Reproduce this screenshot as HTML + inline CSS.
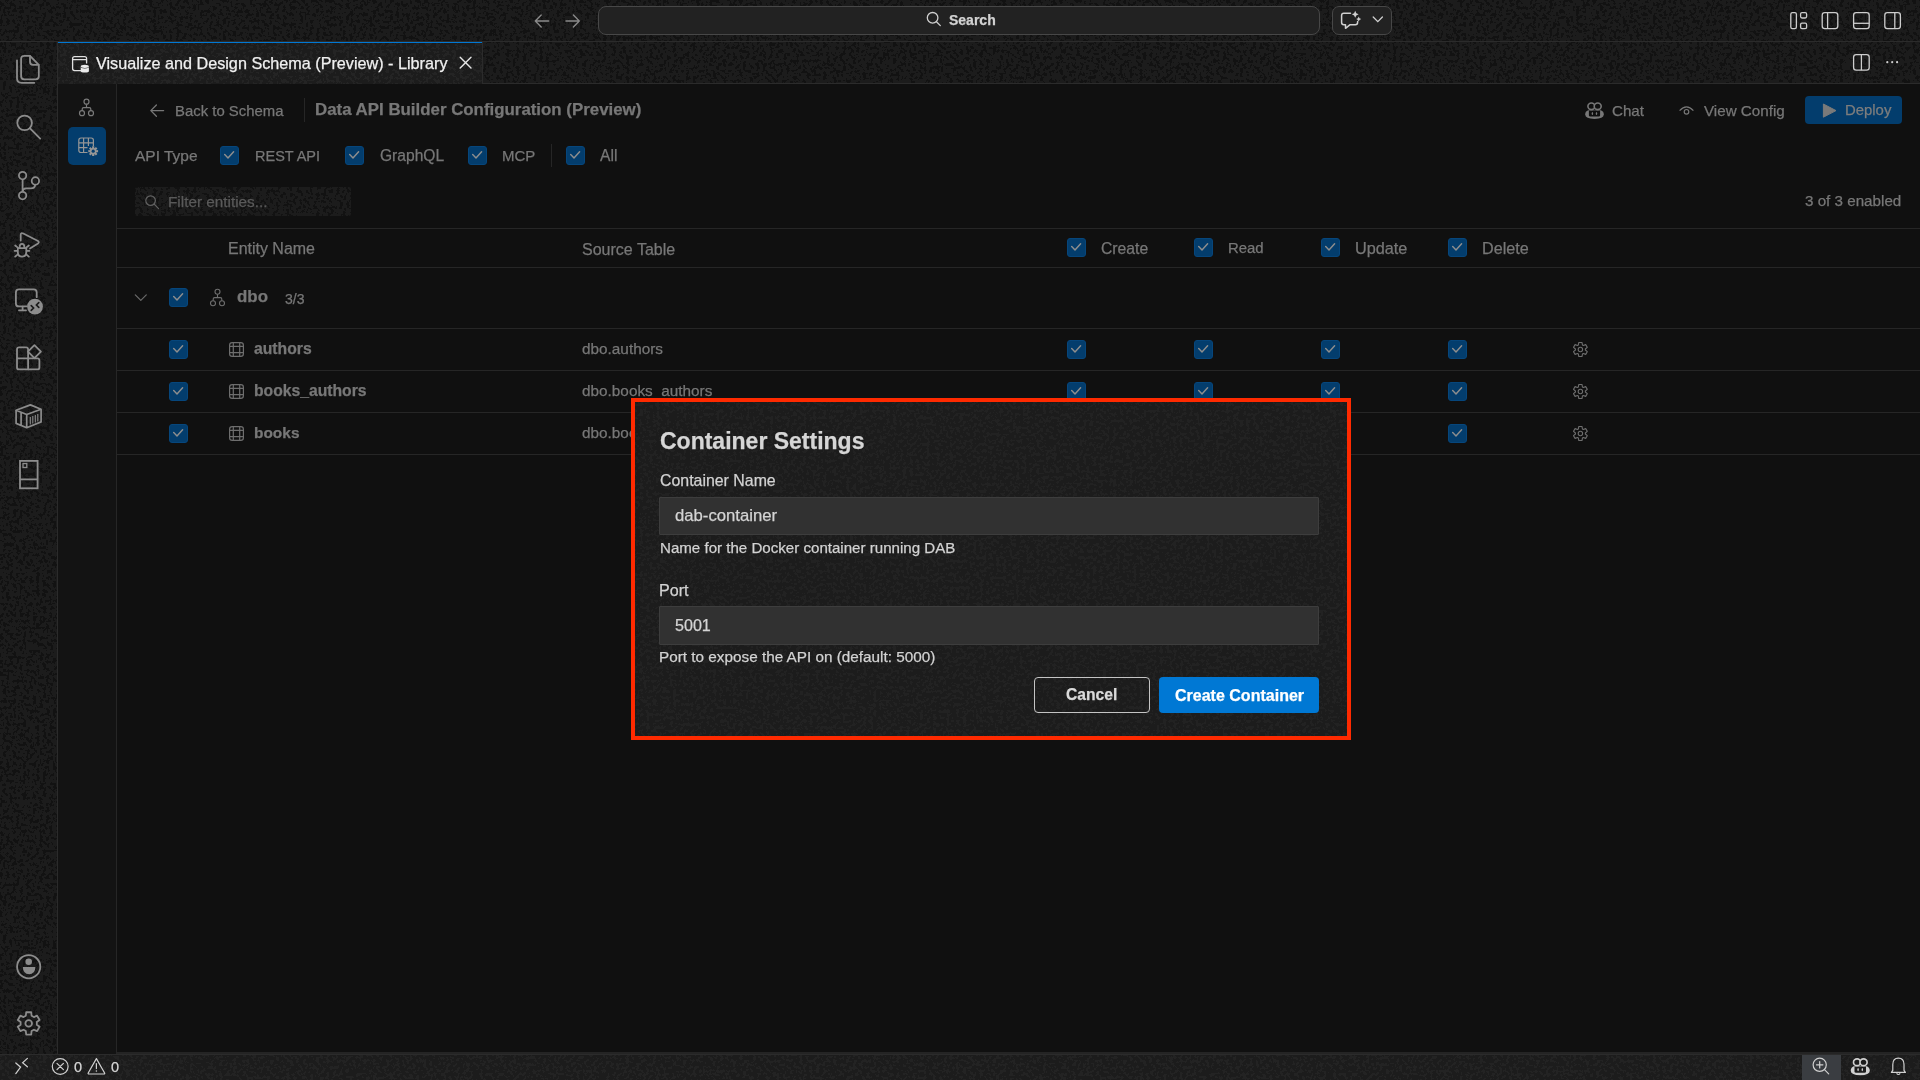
<!DOCTYPE html>
<html><head><meta charset="utf-8"><style>
*{margin:0;padding:0;box-sizing:border-box}
html,body{width:1920px;height:1080px;overflow:hidden;background:#101010;font-family:"Liberation Sans",sans-serif;}
.a{position:absolute}
.t{position:absolute;white-space:nowrap;line-height:1;-webkit-text-stroke:0.25px currentColor;will-change:transform}
svg{position:absolute;overflow:visible}
</style></head><body>
<div class="a" style="left:0px;top:0px;width:1920px;height:41px;background:#1c1c1c;"></div>
<div class="a" style="left:0px;top:41px;width:1920px;height:1px;background:#2b2b2b;"></div>
<div class="a" style="left:0px;top:42px;width:57px;height:1012px;background:#1c1c1c;"></div>
<div class="a" style="left:57px;top:42px;width:1px;height:1012px;background:#2b2b2b;"></div>
<div class="a" style="left:58px;top:42px;width:1862px;height:42px;background:#1c1c1c;"></div>
<div class="a" style="left:482px;top:83px;width:1438px;height:1px;background:#2b2b2b;"></div>
<div class="a" style="left:58px;top:42px;width:424px;height:42px;background:#1c1c1c;"></div>
<div class="a" style="left:58px;top:42px;width:424px;height:1px;background:#0078d4;"></div>
<div class="a" style="left:482px;top:42px;width:1px;height:42px;background:#2b2b2b;"></div>
<div class="a" style="left:58px;top:84px;width:58px;height:970px;background:#131313;"></div>
<div class="a" style="left:116px;top:84px;width:1px;height:970px;background:#262626;"></div>
<div class="a" style="left:117px;top:84px;width:1803px;height:968px;background:#101010;"></div>
<div class="a" style="left:117px;top:1052px;width:1803px;height:2px;background:#242424;"></div>
<div class="a" style="left:0px;top:1054px;width:1920px;height:1px;background:#2b2b2b;"></div>
<div class="a" style="left:0px;top:1055px;width:1920px;height:25px;background:#1c1c1c;"></div>
<svg style="left:0;top:0" width="1920" height="1080" viewBox="0 0 1920 1080" fill="none"><defs><filter id="nzD" x="0" y="0" width="1" height="1" color-interpolation-filters="sRGB"><feTurbulence type="fractalNoise" baseFrequency="0.3" numOctaves="2" seed="3" result="n"/><feColorMatrix in="n" type="matrix" values="0 0 0 0 0 0 0 0 0 0 0 0 0 0 0 1 0 0 0 0" result="a"/><feComponentTransfer in="a" result="m"><feFuncA type="discrete" tableValues="0 0 0 0 0 0 0 0 0 0 0 1 1 1 1 1 1 1 1 1"/></feComponentTransfer><feFlood flood-color="#121212"/><feComposite in2="m" operator="in"/></filter><filter id="nzT" x="0" y="0" width="1" height="1" color-interpolation-filters="sRGB"><feTurbulence type="fractalNoise" baseFrequency="0.3" numOctaves="2" seed="5" result="n"/><feColorMatrix in="n" type="matrix" values="0 0 0 0 0 0 0 0 0 0 0 0 0 0 0 1 0 0 0 0" result="a"/><feComponentTransfer in="a" result="m"><feFuncA type="discrete" tableValues="0 0 0 0 0 0 0 0 0 0 0 1 1 1 1 1 1 1 1 1"/></feComponentTransfer><feFlood flood-color="#242424"/><feComposite in2="m" operator="in"/></filter><filter id="nzS" x="0" y="0" width="1" height="1" color-interpolation-filters="sRGB"><feTurbulence type="fractalNoise" baseFrequency="0.3" numOctaves="2" seed="7" result="n"/><feColorMatrix in="n" type="matrix" values="0 0 0 0 0 0 0 0 0 0 0 0 0 0 0 1 0 0 0 0" result="a"/><feComponentTransfer in="a" result="m"><feFuncA type="discrete" tableValues="0 0 0 0 0 0 0 0 0 0 0 1 1 1 1 1 1 1 1 1"/></feComponentTransfer><feFlood flood-color="#232323"/><feComposite in2="m" operator="in"/></filter><filter id="nzG" x="0" y="0" width="1" height="1" color-interpolation-filters="sRGB"><feTurbulence type="fractalNoise" baseFrequency="0.3" numOctaves="2" seed="11" result="n"/><feColorMatrix in="n" type="matrix" values="0 0 0 0 0 0 0 0 0 0 0 0 0 0 0 1 0 0 0 0" result="a"/><feComponentTransfer in="a" result="m"><feFuncA type="discrete" tableValues="0 0 0 0 0 0 0 0 0 0 0 1 1 1 1 1 1 1 1 1"/></feComponentTransfer><feFlood flood-color="#222222"/><feComposite in2="m" operator="in"/></filter></defs><rect x="0" y="0" width="1920" height="41" fill="#000" filter="url(#nzD)"/><rect x="0" y="42" width="57" height="1012" fill="#000" filter="url(#nzD)"/><rect x="483" y="42" width="1437" height="41" fill="#000" filter="url(#nzD)"/><rect x="58" y="43" width="424" height="41" fill="#000" filter="url(#nzT)"/><rect x="0" y="1055" width="1920" height="25" fill="#000" filter="url(#nzS)"/></svg>
<div class="a" style="left:598px;top:6px;width:722px;height:29px;background:#222;border:1px solid #474747;border-radius:8px"></div>
<div class="a" style="left:1332px;top:6px;width:60px;height:29px;background:#222;border:1px solid #474747;border-radius:7px"></div>
<div class="t" style="left:948.8px;top:13.45px;font-size:14px;color:#d2d2d2;font-weight:bold;">Search</div>
<div class="t" style="left:96.4px;top:55.29px;font-size:16.2px;color:#f0f0f0;font-weight:normal;">Visualize and Design Schema (Preview) - Library</div>
<div class="t" style="left:74.3px;top:1059.93px;font-size:14.5px;color:#d6d6d6;font-weight:normal;">0</div>
<div class="t" style="left:110.6px;top:1059.93px;font-size:14.5px;color:#d6d6d6;font-weight:normal;">0</div>
<div class="a" style="left:1802px;top:1055px;width:39px;height:25px;background:#3a3d41;"></div>
<svg style="left:0;top:0" width="1920" height="1080" viewBox="0 0 1920 1080" fill="none"><g stroke="#8c8c8c" stroke-width="1.8" stroke-linejoin="round" stroke-linecap="round"><path d="M24,55.9 H30 L38.8,64.8 V76.3 Q38.8,79.3 35.8,79.3 H24.1 Q21.1,79.3 21.1,76.3 V58.9 Q21.1,55.9 24.1,55.9Z"/><path d="M30,56.2 V61.8 Q30,64.8 33,64.8 H38.5"/><path d="M17,60.3 V78.3 Q17,82.8 21.5,82.8 H34.4"/></g><g stroke="#8c8c8c" stroke-width="1.8" stroke-linecap="round"><circle cx="24.6" cy="122.9" r="7.3"/><path d="M29.8,128.2 L40.2,138.6"/></g><g stroke="#8c8c8c" stroke-width="1.8" fill="none"><circle cx="22.6" cy="175.6" r="3.7"/><circle cx="35.4" cy="180.9" r="3.7"/><circle cx="22.6" cy="195.6" r="3.7"/><path d="M22.6,179.3 V191.9"/><path d="M35.2,184.6 Q35,188.3 31,188.3 H26 Q22.6,188.5 22.6,191.5"/></g><g stroke="#8c8c8c" stroke-width="1.8" fill="none" stroke-linecap="round" stroke-linejoin="round"><path d="M20.7,240.6 V235 Q20.7,232.2 23.3,233.5 L38,241 Q39.6,242.3 38,243.5 L30,248.5"/><path d="M17.8,248.2 H26.3 V251.8 Q26.3,256.6 22,256.6 Q17.8,256.6 17.8,251.8Z"/><path d="M19.7,248 V246.4 Q19.7,243.8 22,243.8 Q24.3,243.8 24.3,246.4 V248"/><path d="M15.2,245.5 L17.8,247.6 M28.8,245.5 L26.2,247.6 M14.6,250.8 H17.4 M29.4,250.8 H26.6 M15.2,256.6 L17.8,254.4 M28.8,256.6 L26.2,254.4"/></g><g stroke="#8c8c8c" stroke-width="1.8" fill="none" stroke-linecap="round"><path d="M36.7,297.2 V292.4 Q36.7,289.4 33.7,289.4 H18.9 Q15.9,289.4 15.9,292.4 V303.4 Q15.9,306.4 18.9,306.4 H26.8"/><path d="M22.6,306.6 V310.3 M19,310.3 H26"/></g><circle cx="35" cy="306.6" r="7.9" fill="#8c8c8c"/><g stroke="#191919" stroke-width="1.6" fill="none" stroke-linecap="round"><path d="M31.2,305.6 L33.6,308 L31.2,310.4 M38.8,302.6 L36.4,305 L38.8,307.4"/></g><g stroke="#8c8c8c" stroke-width="1.8" fill="none" stroke-linejoin="round"><path d="M19,347.4 H26 Q28.1,347.4 28.1,349.4 V369.4 H19 Q17,369.4 17,367.4 V349.4 Q17,347.4 19,347.4Z"/><path d="M17,358.3 H37.4 Q39.4,358.3 39.4,360.3 V367.4 Q39.4,369.4 37.4,369.4 H28.1"/><path d="M34.4,345.2 L40.9,351.7 L34.4,358.2 L27.9,351.7Z"/></g><g stroke="#8c8c8c" stroke-width="1.7" fill="none" stroke-linejoin="round"><path d="M16.1,410.3 L30.4,404.9 L41.1,409.3 L26.7,414.5Z"/><path d="M16.1,410.3 V423.4 L26.7,427.7 L41.1,421.9 V409.3 M26.7,414.5 V427.7 M21.1,412.5 V425.5"/><path d="M30.3,417 V424.5 M32.8,416 V423.5 M35.3,415 V422.5 M37.8,414 V421.5" stroke-width="1.1"/></g><g stroke="#8c8c8c" stroke-width="1.8" fill="none"><rect x="20" y="460.9" width="17.6" height="27.4"/><path d="M20,479.4 H37.6"/><rect x="23" y="463.5" width="3.8" height="4" stroke-width="1.3"/></g><g><circle cx="28.7" cy="966.7" r="11.6" stroke="#8c8c8c" stroke-width="1.8" fill="none"/><circle cx="28.7" cy="961.8" r="3.3" fill="#8c8c8c"/><path d="M22.9,967.1 H35.3 Q35.3,974.2 29.1,974.2 Q22.9,974.2 22.9,967.1Z" fill="#8c8c8c"/></g><path d="M25.81,1015.73 L26.21,1012.27 L31.19,1012.27 L31.59,1015.73 L33.90,1017.06 L37.09,1015.68 L39.58,1019.99 L36.79,1022.06 L36.79,1024.74 L39.58,1026.81 L37.09,1031.12 L33.90,1029.74 L31.59,1031.07 L31.19,1034.53 L26.21,1034.53 L25.81,1031.07 L23.50,1029.74 L20.31,1031.12 L17.82,1026.81 L20.61,1024.74 L20.61,1022.06 L17.82,1019.99 L20.31,1015.68 L23.50,1017.06Z" stroke="#8c8c8c" stroke-width="1.8" fill="none" stroke-linejoin="round"/><circle cx="28.7" cy="1023.4" r="3.3" stroke="#8c8c8c" stroke-width="1.8" fill="none"/><g stroke="#8a8a8a" stroke-width="1.4" fill="none" stroke-linecap="round" stroke-linejoin="round"><path d="M535.3,21 H548.7 M541.2,15.1 L535.3,21 L541.2,26.9"/><path d="M579.3,21 H565.9 M573.4,15.1 L579.3,21 L573.4,26.9"/></g><g stroke="#cfcfcf" stroke-width="1.3" fill="none" stroke-linecap="round"><circle cx="932.6" cy="17.8" r="5.3"/><path d="M936.5,21.8 L940.3,25.6"/></g><g stroke="#d0d0d0" stroke-width="1.5" fill="none" stroke-linejoin="round" stroke-linecap="round"><path d="M350.5,13.2 H343.8 Q341.6,13.2 341.6,15.4 V22.6 Q341.6,24.8 343.8,24.8 H345.5 V28.3 L349.8,24.8 H355.4 Q357.6,24.8 357.6,22.6 V21.4" transform="translate(1000,0)"/></g><path d="M1355.2,10.8 L1356.3,13.2 L1358.6,14.3 L1356.3,15.4 L1355.2,17.8 L1354.1,15.4 L1351.8,14.3 L1354.1,13.2Z" fill="#d0d0d0"/><path d="M1358.7,16.6 L1359.5,18.3 L1361.2,19.1 L1359.5,19.9 L1358.7,21.6 L1357.9,19.9 L1356.2,19.1 L1357.9,18.3Z" fill="#d0d0d0"/><path d="M1373.2,17 L1377.8,21.6 L1382.4,17" stroke="#cfcfcf" stroke-width="1.3" fill="none" stroke-linecap="round"/><g stroke="#cdcdcd" stroke-width="1.3" fill="none"><rect x="1790.8" y="12.6" width="5.6" height="16" rx="1.6"/><rect x="1800.6" y="12.6" width="6" height="5.4" rx="1.4"/><rect x="1800.6" y="23.2" width="6" height="5.4" rx="1.4"/><rect x="1822.2" y="12.6" width="15.6" height="16" rx="2.6"/><path d="M1827.6,12.6 V28.6"/><rect x="1853.6" y="12.6" width="15.6" height="16" rx="2.6"/><path d="M1853.6,23.3 H1869.2"/><rect x="1884.8" y="12.6" width="15.6" height="16" rx="2.6"/><path d="M1894.8,12.6 V28.6"/><rect x="1853.6" y="54.6" width="15.6" height="15.6" rx="2.6"/><path d="M1861.4,54.6 V70.2"/></g><g fill="#cdcdcd"><circle cx="1887.3" cy="62.2" r="1.1"/><circle cx="1892.2" cy="62.2" r="1.1"/><circle cx="1897.1" cy="62.2" r="1.1"/></g><g stroke="#e0e0e0" stroke-width="1.3" fill="none"><path d="M81.5,70.6 H74.6 Q72.6,70.6 72.6,68.6 V58.6 Q72.6,56.6 74.6,56.6 H84.6 Q86.6,56.6 86.6,58.6 V63.5 M72.6,59.6 H86.6"/></g><g fill="#eaeaea"><ellipse cx="84.8" cy="66.3" rx="4.1" ry="1.6"/><path d="M80.7,66.8 V71.2 Q80.7,72.6 84.8,72.6 Q88.9,72.6 88.9,71.2 V66.8 Q88.9,68.4 84.8,68.4 Q80.7,68.4 80.7,66.8Z"/></g><path d="M460.2,57.2 L471,68 M471,57.2 L460.2,68" stroke="#e6e6e6" stroke-width="1.4" stroke-linecap="round"/><g stroke="#d0d0d0" stroke-width="1.2" fill="none" stroke-linecap="round"><path d="M15.8,1063 L20.6,1067.2 L15.8,1073.6 M27.4,1058.4 L22.6,1062.7 L27.4,1066.8"/><circle cx="60.2" cy="1066.5" r="7.9"/><path d="M57,1063.3 L63.4,1069.7 M63.4,1063.3 L57,1069.7"/><path d="M96.4,1058.6 L104.6,1073 Q105,1074 104,1074 H88.8 Q87.8,1074 88.2,1073Z" stroke-linejoin="round"/><path d="M96.4,1063.6 V1068.6"/></g><circle cx="96.4" cy="1071" r="0.8" fill="#d0d0d0"/><g stroke="#d0d0d0" stroke-width="1.2" fill="none" stroke-linecap="round"><circle cx="1819.7" cy="1064.8" r="6.6"/><path d="M1824.5,1069.6 L1828.7,1073.8 M1819.7,1061.6 V1068 M1816.5,1064.8 H1822.9"/></g></svg>
<div class="a" style="left:68px;top:127px;width:38px;height:38px;background:#033d6d;border-radius:5px"></div>
<div class="t" style="left:174.8px;top:103.79px;font-size:14.9px;color:#777777;font-weight:normal;">Back to Schema</div>
<div class="a" style="left:304px;top:98px;width:1px;height:24px;background:#262626;"></div>
<div class="t" style="left:314.7px;top:101.73px;font-size:16.86px;color:#777777;font-weight:bold;">Data API Builder Configuration (Preview)</div>
<div class="t" style="left:1612.3px;top:103.28px;font-size:15.15px;color:#777777;font-weight:normal;">Chat</div>
<div class="t" style="left:1704px;top:103.23px;font-size:15.2px;color:#777777;font-weight:normal;">View Config</div>
<div class="a" style="left:1805px;top:96px;width:97px;height:28px;background:#033d6d;border-radius:4px"></div>
<div class="t" style="left:1844.6px;top:103.49px;font-size:14.9px;color:#7d7d7d;font-weight:normal;">Deploy</div>
<div class="t" style="left:135px;top:147.78px;font-size:15.5px;color:#777777;font-weight:normal;">API Type</div>
<div class="a" style="left:220px;top:146px;width:19px;height:19px;background:#033d6d;border:1px solid #06467c;border-radius:3px"></div>
<div class="t" style="left:254.5px;top:148.63px;font-size:14.5px;color:#777777;font-weight:normal;">REST API</div>
<div class="a" style="left:345px;top:146px;width:19px;height:19px;background:#033d6d;border:1px solid #06467c;border-radius:3px"></div>
<div class="t" style="left:379.7px;top:147.71px;font-size:15.58px;color:#777777;font-weight:normal;">GraphQL</div>
<div class="a" style="left:468px;top:146px;width:19px;height:19px;background:#033d6d;border:1px solid #06467c;border-radius:3px"></div>
<div class="t" style="left:502.4px;top:148.20px;font-size:15.0px;color:#777777;font-weight:normal;">MCP</div>
<div class="a" style="left:551px;top:144px;width:1px;height:23px;background:#262626;"></div>
<div class="a" style="left:566px;top:146px;width:19px;height:19px;background:#033d6d;border:1px solid #06467c;border-radius:3px"></div>
<div class="t" style="left:600px;top:147.64px;font-size:15.66px;color:#777777;font-weight:normal;">All</div>
<div class="a" style="left:135px;top:187px;width:216px;height:29px;background:#1c1c1c;border-radius:2px"></div>
<svg style="left:0;top:0" width="1920" height="1080" viewBox="0 0 1920 1080" fill="none"><rect x="135" y="187" width="216" height="29" fill="#000" filter="url(#nzD)"/></svg>
<div class="t" style="left:167.5px;top:194.45px;font-size:15.3px;color:#5a5a5a;font-weight:normal;">Filter entities...</div>
<div class="t" style="left:1805px;top:192.93px;font-size:15.2px;color:#777777;font-weight:normal;">3 of 3 enabled</div>
<div class="a" style="left:117px;top:228px;width:1803px;height:1px;background:#262626;"></div>
<div class="t" style="left:227.7px;top:241.48px;font-size:15.97px;color:#777777;font-weight:normal;">Entity Name</div>
<div class="t" style="left:582.4px;top:241.13px;font-size:16.03px;color:#777777;font-weight:normal;">Source Table</div>
<div class="a" style="left:1067px;top:238px;width:19px;height:19px;background:#033d6d;border:1px solid #06467c;border-radius:3px"></div>
<div class="t" style="left:1101.2px;top:240.58px;font-size:15.73px;color:#777777;font-weight:normal;">Create</div>
<div class="a" style="left:1194px;top:238px;width:19px;height:19px;background:#033d6d;border:1px solid #06467c;border-radius:3px"></div>
<div class="t" style="left:1228.2px;top:241.26px;font-size:14.93px;color:#777777;font-weight:normal;">Read</div>
<div class="a" style="left:1321px;top:238px;width:19px;height:19px;background:#033d6d;border:1px solid #06467c;border-radius:3px"></div>
<div class="t" style="left:1355.2px;top:240.14px;font-size:16.25px;color:#777777;font-weight:normal;">Update</div>
<div class="a" style="left:1448px;top:238px;width:19px;height:19px;background:#033d6d;border:1px solid #06467c;border-radius:3px"></div>
<div class="t" style="left:1482.2px;top:240.22px;font-size:16.16px;color:#777777;font-weight:normal;">Delete</div>
<div class="a" style="left:117px;top:267px;width:1803px;height:1px;background:#262626;"></div>
<div class="a" style="left:169px;top:288px;width:19px;height:19px;background:#033d6d;border:1px solid #06467c;border-radius:3px"></div>
<div class="t" style="left:236.9px;top:289.29px;font-size:16.9px;color:#777777;font-weight:bold;">dbo</div>
<div class="t" style="left:285px;top:292.12px;font-size:14.03px;color:#777777;font-weight:normal;">3/3</div>
<div class="a" style="left:117px;top:328px;width:1803px;height:1px;background:#262626;"></div>
<div class="a" style="left:169px;top:340px;width:19px;height:19px;background:#033d6d;border:1px solid #06467c;border-radius:3px"></div>
<div class="t" style="left:253.5px;top:341.18px;font-size:15.73px;color:#777777;font-weight:bold;">authors</div>
<div class="t" style="left:582.4px;top:341.21px;font-size:15.34px;color:#777777;font-weight:normal;">dbo.authors</div>
<div class="a" style="left:1067px;top:340px;width:19px;height:19px;background:#033d6d;border:1px solid #06467c;border-radius:3px"></div>
<div class="a" style="left:1194px;top:340px;width:19px;height:19px;background:#033d6d;border:1px solid #06467c;border-radius:3px"></div>
<div class="a" style="left:1321px;top:340px;width:19px;height:19px;background:#033d6d;border:1px solid #06467c;border-radius:3px"></div>
<div class="a" style="left:1448px;top:340px;width:19px;height:19px;background:#033d6d;border:1px solid #06467c;border-radius:3px"></div>
<div class="a" style="left:117px;top:370px;width:1803px;height:1px;background:#262626;"></div>
<div class="a" style="left:169px;top:382px;width:19px;height:19px;background:#033d6d;border:1px solid #06467c;border-radius:3px"></div>
<div class="t" style="left:253.5px;top:383.20px;font-size:15.71px;color:#777777;font-weight:bold;">books_authors</div>
<div class="t" style="left:582.4px;top:383.21px;font-size:15.34px;color:#777777;font-weight:normal;">dbo.books_authors</div>
<div class="a" style="left:1067px;top:382px;width:19px;height:19px;background:#033d6d;border:1px solid #06467c;border-radius:3px"></div>
<div class="a" style="left:1194px;top:382px;width:19px;height:19px;background:#033d6d;border:1px solid #06467c;border-radius:3px"></div>
<div class="a" style="left:1321px;top:382px;width:19px;height:19px;background:#033d6d;border:1px solid #06467c;border-radius:3px"></div>
<div class="a" style="left:1448px;top:382px;width:19px;height:19px;background:#033d6d;border:1px solid #06467c;border-radius:3px"></div>
<div class="a" style="left:117px;top:412px;width:1803px;height:1px;background:#262626;"></div>
<div class="a" style="left:169px;top:424px;width:19px;height:19px;background:#033d6d;border:1px solid #06467c;border-radius:3px"></div>
<div class="t" style="left:253.5px;top:425.42px;font-size:15.45px;color:#777777;font-weight:bold;">books</div>
<div class="t" style="left:582.4px;top:425.21px;font-size:15.34px;color:#777777;font-weight:normal;">dbo.books</div>
<div class="a" style="left:1067px;top:424px;width:19px;height:19px;background:#033d6d;border:1px solid #06467c;border-radius:3px"></div>
<div class="a" style="left:1194px;top:424px;width:19px;height:19px;background:#033d6d;border:1px solid #06467c;border-radius:3px"></div>
<div class="a" style="left:1321px;top:424px;width:19px;height:19px;background:#033d6d;border:1px solid #06467c;border-radius:3px"></div>
<div class="a" style="left:1448px;top:424px;width:19px;height:19px;background:#033d6d;border:1px solid #06467c;border-radius:3px"></div>
<div class="a" style="left:117px;top:454px;width:1803px;height:1px;background:#262626;"></div>
<svg style="left:0;top:0" width="1920" height="1080" viewBox="0 0 1920 1080" fill="none"><g stroke="#7a7a7a" stroke-width="1.2" fill="none"><circle cx="86.5" cy="101.7" r="2.5"/><circle cx="82" cy="113.2" r="2.5"/><circle cx="91" cy="113.2" r="2.5"/><path d="M86.5,104.2 V107.6 M82.2,110.7 V109 Q82.2,107.6 83.6,107.6 H89.4 Q90.8,107.6 90.8,109 V110.7"/></g><g stroke="#969696" stroke-width="1.2" fill="none"><path d="M87.5,152.5 H81 Q78.8,152.5 78.8,150.3 V140.2 Q78.8,138 81,138 H91.2 Q93.4,138 93.4,140.2 V146"/><path d="M83.6,138 V152.5 M88.4,138 V146 M78.8,142.8 H93.4 M78.8,147.6 H87.5"/></g><path d="M92.13,147.97 L92.11,146.32 L94.29,146.32 L94.27,147.97 L94.73,148.16 L95.88,146.98 L97.42,148.52 L96.24,149.67 L96.43,150.13 L98.08,150.11 L98.08,152.29 L96.43,152.27 L96.24,152.73 L97.42,153.88 L95.88,155.42 L94.73,154.24 L94.27,154.43 L94.29,156.08 L92.11,156.08 L92.13,154.43 L91.67,154.24 L90.52,155.42 L88.98,153.88 L90.16,152.73 L89.97,152.27 L88.32,152.29 L88.32,150.11 L89.97,150.13 L90.16,149.67 L88.98,148.52 L90.52,146.98 L91.67,148.16Z" fill="#969696"/><circle cx="93.2" cy="151.2" r="1.6" fill="#033d6d"/><path d="M150.8,110.6 H163.6 M156.4,105 L150.8,110.6 L156.4,116.2" stroke="#777777" stroke-width="1.3" fill="none" stroke-linecap="round" stroke-linejoin="round"/><g><path d="M1588.20,110.20 Q1585.20,111.20 1585.20,114.60 Q1585.40,118.90 1594.50,118.90 Q1603.60,118.90 1603.80,114.60 Q1603.80,111.20 1600.80,110.20Z" fill="#777777"/><path d="M1588.90,110.50 H1600.10 V115.60 Q1600.10,116.60 1598.60,116.60 H1590.40 Q1588.90,116.60 1588.90,115.60Z" fill="#101010"/><ellipse cx="1591.40" cy="106.30" rx="3.50" ry="3.30" stroke="#777777" stroke-width="1.60" fill="#101010"/><ellipse cx="1597.70" cy="106.30" rx="3.50" ry="3.30" stroke="#777777" stroke-width="1.60" fill="#101010"/><ellipse cx="1592.40" cy="113.50" rx="0.70" ry="1.50" fill="#777777"/><ellipse cx="1596.50" cy="113.50" rx="0.70" ry="1.50" fill="#777777"/></g><g stroke="#777777" stroke-width="1.2" fill="none"><path d="M1679.6,110.6 Q1686.5,103 1693.4,110.6"/><circle cx="1686.5" cy="111.8" r="2.3"/></g><path d="M1823.4,104 L1836,110.6 L1823.4,117.2Z" fill="#7a7a7a" stroke="#7a7a7a" stroke-width="1" stroke-linejoin="round"/><path d="M224.7,154.6 L228,157.9 L233.6,151.7" stroke="#8e8e8e" stroke-width="1.45" fill="none" stroke-linecap="round" stroke-linejoin="round"/><path d="M349.7,154.6 L353,157.9 L358.6,151.7" stroke="#8e8e8e" stroke-width="1.45" fill="none" stroke-linecap="round" stroke-linejoin="round"/><path d="M472.7,154.6 L476,157.9 L481.6,151.7" stroke="#8e8e8e" stroke-width="1.45" fill="none" stroke-linecap="round" stroke-linejoin="round"/><path d="M570.7,154.6 L574,157.9 L579.6,151.7" stroke="#8e8e8e" stroke-width="1.45" fill="none" stroke-linecap="round" stroke-linejoin="round"/><g stroke="#626262" stroke-width="1.2" fill="none" stroke-linecap="round"><circle cx="150.6" cy="200.6" r="4.8"/><path d="M154.2,204.2 L158.6,208.6"/></g><path d="M1071.7,246.6 L1075,249.9 L1080.6,243.7" stroke="#8e8e8e" stroke-width="1.45" fill="none" stroke-linecap="round" stroke-linejoin="round"/><path d="M1198.7,246.6 L1202,249.9 L1207.6,243.7" stroke="#8e8e8e" stroke-width="1.45" fill="none" stroke-linecap="round" stroke-linejoin="round"/><path d="M1325.7,246.6 L1329,249.9 L1334.6,243.7" stroke="#8e8e8e" stroke-width="1.45" fill="none" stroke-linecap="round" stroke-linejoin="round"/><path d="M1452.7,246.6 L1456,249.9 L1461.6,243.7" stroke="#8e8e8e" stroke-width="1.45" fill="none" stroke-linecap="round" stroke-linejoin="round"/><path d="M135.3,294.8 L140.8,300.3 L146.3,294.8" stroke="#6a6a6a" stroke-width="1.2" fill="none" stroke-linecap="round" stroke-linejoin="round"/><path d="M173.7,296.6 L177,299.9 L182.6,293.7" stroke="#8e8e8e" stroke-width="1.45" fill="none" stroke-linecap="round" stroke-linejoin="round"/><g stroke="#6e6e6e" stroke-width="1.1" fill="none"><circle cx="217.5" cy="291.7" r="2.5"/><circle cx="213" cy="303.2" r="2.5"/><circle cx="222" cy="303.2" r="2.5"/><path d="M217.5,294.2 V297.6 M213.2,300.7 V299 Q213.2,297.6 214.6,297.6 H220.4 Q221.8,297.6 221.8,299 V300.7"/></g><path d="M173.7,348.6 L177,351.9 L182.6,345.7" stroke="#8e8e8e" stroke-width="1.45" fill="none" stroke-linecap="round" stroke-linejoin="round"/><g stroke="#6e6e6e" stroke-width="1.2" fill="none"><rect x="229.6" y="342.6" width="13.8" height="13.8" rx="2.6"/><path d="M233.3,342.6 V356.4 M239.7,342.6 V356.4 M229.6,346.3 H243.4 M229.6,352.7 H243.4"/></g><path d="M1071.7,348.6 L1075,351.9 L1080.6,345.7" stroke="#8e8e8e" stroke-width="1.45" fill="none" stroke-linecap="round" stroke-linejoin="round"/><path d="M1198.7,348.6 L1202,351.9 L1207.6,345.7" stroke="#8e8e8e" stroke-width="1.45" fill="none" stroke-linecap="round" stroke-linejoin="round"/><path d="M1325.7,348.6 L1329,351.9 L1334.6,345.7" stroke="#8e8e8e" stroke-width="1.45" fill="none" stroke-linecap="round" stroke-linejoin="round"/><path d="M1452.7,348.6 L1456,351.9 L1461.6,345.7" stroke="#8e8e8e" stroke-width="1.45" fill="none" stroke-linecap="round" stroke-linejoin="round"/><path d="M1578.36,344.93 L1578.83,342.47 L1581.97,342.47 L1582.44,344.93 L1583.33,345.45 L1585.70,344.63 L1587.27,347.35 L1585.37,348.98 L1585.37,350.02 L1587.27,351.65 L1585.70,354.37 L1583.33,353.55 L1582.44,354.07 L1581.97,356.53 L1578.83,356.53 L1578.36,354.07 L1577.47,353.55 L1575.10,354.37 L1573.53,351.65 L1575.43,350.02 L1575.43,348.98 L1573.53,347.35 L1575.10,344.63 L1577.47,345.45Z" stroke="#6e6e6e" stroke-width="1.1" fill="none" stroke-linejoin="round"/><circle cx="1580.4" cy="349.5" r="2.2" stroke="#6e6e6e" stroke-width="1.1" fill="none"/><path d="M173.7,390.6 L177,393.9 L182.6,387.7" stroke="#8e8e8e" stroke-width="1.45" fill="none" stroke-linecap="round" stroke-linejoin="round"/><g stroke="#6e6e6e" stroke-width="1.2" fill="none"><rect x="229.6" y="384.6" width="13.8" height="13.8" rx="2.6"/><path d="M233.3,384.6 V398.4 M239.7,384.6 V398.4 M229.6,388.3 H243.4 M229.6,394.7 H243.4"/></g><path d="M1071.7,390.6 L1075,393.9 L1080.6,387.7" stroke="#8e8e8e" stroke-width="1.45" fill="none" stroke-linecap="round" stroke-linejoin="round"/><path d="M1198.7,390.6 L1202,393.9 L1207.6,387.7" stroke="#8e8e8e" stroke-width="1.45" fill="none" stroke-linecap="round" stroke-linejoin="round"/><path d="M1325.7,390.6 L1329,393.9 L1334.6,387.7" stroke="#8e8e8e" stroke-width="1.45" fill="none" stroke-linecap="round" stroke-linejoin="round"/><path d="M1452.7,390.6 L1456,393.9 L1461.6,387.7" stroke="#8e8e8e" stroke-width="1.45" fill="none" stroke-linecap="round" stroke-linejoin="round"/><path d="M1578.36,386.93 L1578.83,384.47 L1581.97,384.47 L1582.44,386.93 L1583.33,387.45 L1585.70,386.63 L1587.27,389.35 L1585.37,390.98 L1585.37,392.02 L1587.27,393.65 L1585.70,396.37 L1583.33,395.55 L1582.44,396.07 L1581.97,398.53 L1578.83,398.53 L1578.36,396.07 L1577.47,395.55 L1575.10,396.37 L1573.53,393.65 L1575.43,392.02 L1575.43,390.98 L1573.53,389.35 L1575.10,386.63 L1577.47,387.45Z" stroke="#6e6e6e" stroke-width="1.1" fill="none" stroke-linejoin="round"/><circle cx="1580.4" cy="391.5" r="2.2" stroke="#6e6e6e" stroke-width="1.1" fill="none"/><path d="M173.7,432.6 L177,435.9 L182.6,429.7" stroke="#8e8e8e" stroke-width="1.45" fill="none" stroke-linecap="round" stroke-linejoin="round"/><g stroke="#6e6e6e" stroke-width="1.2" fill="none"><rect x="229.6" y="426.6" width="13.8" height="13.8" rx="2.6"/><path d="M233.3,426.6 V440.4 M239.7,426.6 V440.4 M229.6,430.3 H243.4 M229.6,436.7 H243.4"/></g><path d="M1071.7,432.6 L1075,435.9 L1080.6,429.7" stroke="#8e8e8e" stroke-width="1.45" fill="none" stroke-linecap="round" stroke-linejoin="round"/><path d="M1198.7,432.6 L1202,435.9 L1207.6,429.7" stroke="#8e8e8e" stroke-width="1.45" fill="none" stroke-linecap="round" stroke-linejoin="round"/><path d="M1325.7,432.6 L1329,435.9 L1334.6,429.7" stroke="#8e8e8e" stroke-width="1.45" fill="none" stroke-linecap="round" stroke-linejoin="round"/><path d="M1452.7,432.6 L1456,435.9 L1461.6,429.7" stroke="#8e8e8e" stroke-width="1.45" fill="none" stroke-linecap="round" stroke-linejoin="round"/><path d="M1578.36,428.93 L1578.83,426.47 L1581.97,426.47 L1582.44,428.93 L1583.33,429.45 L1585.70,428.63 L1587.27,431.35 L1585.37,432.98 L1585.37,434.02 L1587.27,435.65 L1585.70,438.37 L1583.33,437.55 L1582.44,438.07 L1581.97,440.53 L1578.83,440.53 L1578.36,438.07 L1577.47,437.55 L1575.10,438.37 L1573.53,435.65 L1575.43,434.02 L1575.43,432.98 L1573.53,431.35 L1575.10,428.63 L1577.47,429.45Z" stroke="#6e6e6e" stroke-width="1.1" fill="none" stroke-linejoin="round"/><circle cx="1580.4" cy="433.5" r="2.2" stroke="#6e6e6e" stroke-width="1.1" fill="none"/></svg>
<svg style="left:0;top:0" width="1920" height="1080" viewBox="0 0 1920 1080" fill="none"><g><path d="M1853.78,1066.22 Q1850.71,1067.24 1850.71,1070.73 Q1850.91,1075.14 1860.25,1075.14 Q1869.59,1075.14 1869.79,1070.73 Q1869.79,1067.24 1866.72,1066.22Z" fill="#d0d0d0"/><path d="M1854.50,1066.52 H1866.00 V1071.76 Q1866.00,1072.78 1864.46,1072.78 H1856.04 Q1854.50,1072.78 1854.50,1071.76Z" fill="#1c1c1c"/><ellipse cx="1857.07" cy="1062.21" rx="3.59" ry="3.39" stroke="#d0d0d0" stroke-width="1.64" fill="#1c1c1c"/><ellipse cx="1863.53" cy="1062.21" rx="3.59" ry="3.39" stroke="#d0d0d0" stroke-width="1.64" fill="#1c1c1c"/><ellipse cx="1858.09" cy="1069.60" rx="0.72" ry="1.54" fill="#d0d0d0"/><ellipse cx="1862.30" cy="1069.60" rx="0.72" ry="1.54" fill="#d0d0d0"/></g><g stroke="#d0d0d0" stroke-width="1.2" fill="none" stroke-linejoin="round"><path d="M1891.4,1072.4 H1905.4 L1904,1070.4 V1064.6 Q1904,1058.2 1898.4,1058.2 Q1892.8,1058.2 1892.8,1064.6 V1070.4Z"/><path d="M1896.6,1073.4 Q1898.4,1075.6 1900.2,1073.4"/></g></svg>
<div class="a" style="left:631px;top:398px;width:720px;height:342px;background:#1c1c1c;border:4px solid #ff2a00"></div>
<svg style="left:0;top:0" width="1920" height="1080" viewBox="0 0 1920 1080" fill="none"><rect x="635" y="402" width="712" height="334" fill="#000" filter="url(#nzG)"/></svg>
<div class="t" style="left:660px;top:430.33px;font-size:23.0px;color:#d6d6d6;font-weight:bold;">Container Settings</div>
<div class="t" style="left:660px;top:472.54px;font-size:15.9px;color:#d2d2d2;font-weight:normal;">Container Name</div>
<div class="a" style="left:659px;top:497px;width:660px;height:38px;background:#313131;border:1px solid #3d3d3d;border-radius:1px"></div>
<div class="t" style="left:674.6px;top:507.86px;font-size:16.7px;color:#d4d4d4;font-weight:normal;">dab-container</div>
<div class="t" style="left:660px;top:540.12px;font-size:15.1px;color:#d2d2d2;font-weight:normal;">Name for the Docker container running DAB</div>
<div class="t" style="left:659px;top:582.37px;font-size:16.1px;color:#d2d2d2;font-weight:normal;">Port</div>
<div class="a" style="left:659px;top:606px;width:660px;height:39px;background:#313131;border:1px solid #3d3d3d;border-radius:1px"></div>
<div class="t" style="left:674.5px;top:617.17px;font-size:16.1px;color:#d4d4d4;font-weight:normal;">5001</div>
<div class="t" style="left:659px;top:649.45px;font-size:15.3px;color:#d2d2d2;font-weight:normal;">Port to expose the API on (default: 5000)</div>
<div class="a" style="left:1034px;top:677px;width:116px;height:36px;border:1px solid #c4c4c4;border-radius:4px"></div>
<div class="t" style="left:1066.4px;top:687.16px;font-size:15.64px;color:#dadada;font-weight:bold;">Cancel</div>
<div class="a" style="left:1159px;top:677px;width:160px;height:36px;background:#0078d4;border-radius:4px"></div>
<div class="t" style="left:1175px;top:686.83px;font-size:16.03px;color:#ffffff;font-weight:bold;">Create Container</div>
</body></html>
